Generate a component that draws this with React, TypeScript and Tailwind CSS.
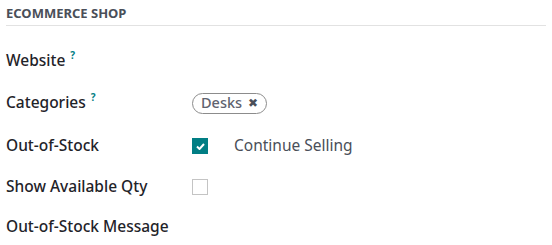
import React from "react";

const Help = () => (
  <sup className="ml-[5px] -top-[7px] text-[10px] font-bold text-[#017e84]">?</sup>
);

const Row = ({
  label,
  help,
  h,
  children,
}: {
  label: string;
  help?: boolean;
  h: string;
  children?: React.ReactNode;
}) => (
  <div className={`flex items-center ${h}`}>
    <div className="w-[186px] shrink-0 text-[15.5px] font-medium text-[#1f2329]">
      {label}
      {help && <Help />}
    </div>
    <div className="flex items-center">{children}</div>
  </div>
);

export default function App() {
  return (
    <div
      className="w-[552px] h-[245px] bg-white px-[6px] overflow-hidden"
      style={{ fontFamily: '"Noto Sans", sans-serif' }}
    >
      <div className="pt-[5px] pb-[4px] border-b border-[#e2e2e2]">
        <h3 className="text-[13px] font-bold uppercase text-[#4a4f59] leading-[16px]">
          eCommerce Shop
        </h3>
      </div>
      <div className="mt-[15px]">
        <Row label="Website" help h="h-[40px]" />
        <Row label="Categories" help h="h-[44px]">
          <span className="flex items-center h-[21px] px-[8px] rounded-full border border-[#8c8c8c] text-[14.5px] font-medium text-[#5f636f]">
            Desks
            <span className="ml-[6px] text-[12px] text-[#4a4f59]">✖</span>
          </span>
        </Row>
        <Row label="Out-of-Stock" h="h-[42px]">
          <span className="flex items-center justify-center w-[16px] h-[16px] bg-[#017e84]">
            <svg width="9" height="7" viewBox="0 0 9 7">
              <path d="M1 3.5 L3.5 6 L8 1" stroke="white" strokeWidth="2" fill="none" />
            </svg>
          </span>
          <span className="ml-[26px] text-[15.5px] text-[#4a4f59]">Continue Selling</span>
        </Row>
        <Row label="Show Available Qty" h="h-[40px]">
          <span className="w-[16px] h-[16px] border border-[#c4c4c4] bg-white" />
        </Row>
        <Row label="Out-of-Stock Message" h="h-[40px]" />
      </div>
    </div>
  );
}
